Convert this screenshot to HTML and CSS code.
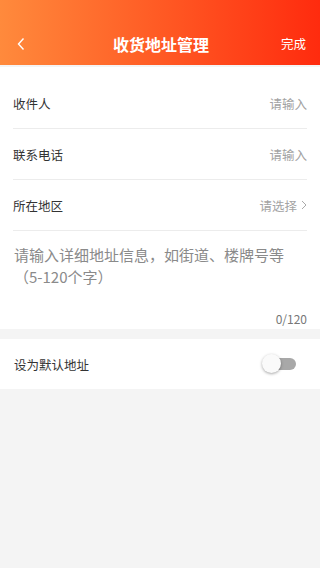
FILE: index.html
```html
<!DOCTYPE html>
<html lang="zh">
<head>
<meta charset="utf-8">
<link rel="stylesheet" href="styles.css">
</head>
<body>
<header class="topbar">
  <span class="back"><svg width="10" height="14" viewBox="0 0 10 14"><path d="M7.5 1.5 L2.5 7 L7.5 12.5" fill="none" stroke="#fff" stroke-width="1.4"/></svg></span>
  <h1 class="title">收货地址管理</h1>
  <span class="done">完成</span>
</header>
<section class="card form">
  <div class="row"><span class="label">收件人</span><span class="ph">请输入</span></div>
  <div class="row"><span class="label">联系电话</span><span class="ph">请输入</span></div>
  <div class="row"><span class="label">所在地区</span><span class="ph">请选择<svg class="arrow" width="6" height="10" viewBox="0 0 6 10"><path d="M1 1 L5 5 L1 9" fill="none" stroke="#aaa" stroke-width="1"/></svg></span></div>
  <div class="detail">
    <p class="detail-ph">请输入详细地址信息，如街道、楼牌号等<br>（5-120个字）</p>
    <span class="count">0/120</span>
  </div>
</section>
<section class="card default-row">
  <span class="label">设为默认地址</span>
  <span class="toggle"><span class="track"></span><span class="thumb"></span></span>
</section>
</body>
</html>
```
FILE: styles.css
```css
* { box-sizing: border-box; }
html, body { margin: 0; padding: 0; }
body {
  background: #f4f4f4;
  font-family: "Noto Sans CJK SC", "Noto Sans", sans-serif;
  width: 320px;
  min-height: 568px;
}
.topbar {
  height: 65px;
  background: linear-gradient(90deg, #ff8a3c 0%, #ff5a24 50%, #ff2b0e 100%);
  display: flex;
  align-items: flex-end;
  justify-content: space-between;
  padding: 0 14px 10px 16px;
  color: #fff;
}
.back { width: 30px; height: 22px; display: flex; align-items: center; }
.title {
  margin: 0;
  font-size: 16px;
  font-weight: bold;
  line-height: 22px;
}
.done { width: 30px; text-align: right; font-size: 12.5px; line-height: 22px; }
.card { background: #fff; }
.form { margin-top: 2px; padding-top: 11px; }
.row {
  margin: 0 13px;
  height: 51px;
  border-bottom: 1px solid #ececec;
  display: flex;
  align-items: center;
  justify-content: space-between;
}
.label { font-size: 12.5px; color: #333; }
.ph { font-size: 12.5px; color: #a3a3a3; display: flex; align-items: center; gap: 3px; }
.arrow { margin-left: 1px; }
.detail {
  padding: 13px 14px 3px 14px;
  display: flex;
  flex-direction: column;
}
.detail-ph {
  margin: 0;
  font-size: 15px;
  line-height: 22px;
  color: #8a8a8a;
  height: 68px;
}
.count { align-self: flex-end; font-size: 12px; color: #777; line-height: 14px; margin-right: -1px; }
.default-row {
  margin-top: 10px;
  height: 50px;
  display: flex;
  align-items: center;
  justify-content: space-between;
  padding: 0 24px 0 14px;
}
.toggle { position: relative; width: 34px; height: 20px; }
.track {
  position: absolute; left: 5px; top: 4px;
  width: 29px; height: 12px; border-radius: 6px; background: #a8a8a8;
}
.thumb {
  position: absolute; left: 0; top: 0;
  width: 19px; height: 19px; border-radius: 50%;
  background: #fafafa;
  box-shadow: 0 1px 3px rgba(0,0,0,0.35);
}
```
